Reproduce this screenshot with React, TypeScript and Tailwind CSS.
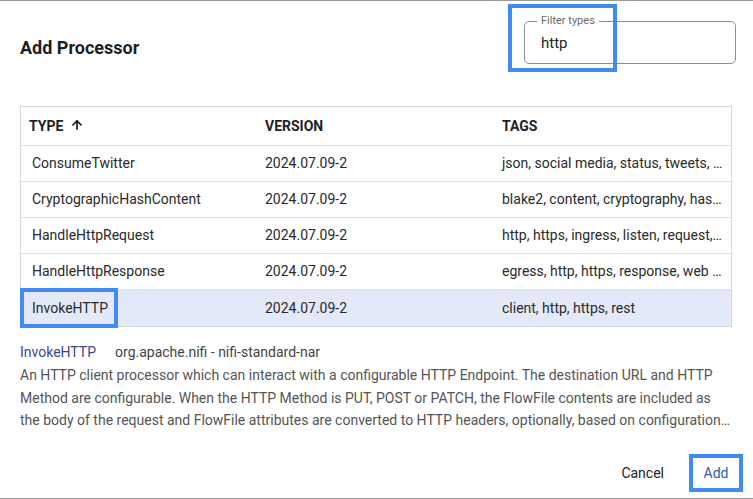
import { ArrowUp } from "lucide-react";

const rows = [
  { type: "ConsumeTwitter", version: "2024.07.09-2", tags: "json, social media, status, tweets, …" },
  { type: "CryptographicHashContent", version: "2024.07.09-2", tags: "blake2, content, cryptography, has…" },
  { type: "HandleHttpRequest", version: "2024.07.09-2", tags: "http, https, ingress, listen, request,…" },
  { type: "HandleHttpResponse", version: "2024.07.09-2", tags: "egress, http, https, response, web …" },
  { type: "InvokeHTTP", version: "2024.07.09-2", tags: "client, http, https, rest" },
];

const App = () => {
  return (
    <div className="flex h-[499px] w-[753px] flex-col overflow-hidden border-y border-[#9a9a9a] bg-white font-['Roboto',sans-serif] text-[#222]">
      {/* header */}
      <div className="flex h-[105px] shrink-0 items-start justify-between pl-5 pr-[17px]">
        <h1 className="mt-[35px] text-[18px] font-bold leading-6 text-[#1f1f1f]">Add Processor</h1>
        <div className="relative mt-5">
          <div className="relative h-[43px] w-[212px] rounded-[5px] border border-[#8e8e8e]">
            <span className="absolute -top-[8px] left-[12px] bg-white px-[4px] text-[11px] leading-[14px] text-[#6b6b6b]">
              Filter types
            </span>
            <div className="pl-4 pt-[11px] text-[15px] leading-5 text-[#1f1f1f]">http</div>
          </div>
          <div className="pointer-events-none absolute -left-[16px] -top-[17px] h-[68px] w-[109px] border-4 border-[#4189f5]" />
        </div>
      </div>

      {/* table */}
      <div className="mx-5 w-[712px] shrink-0 border border-[#d8d8d8] text-[14px]">
        <div className="grid h-[39px] grid-cols-[233px_237px_1fr] items-center border-b border-[#e0e0e0] font-bold text-[#222]">
          <div className="flex items-center gap-[7px] pl-[8px]">
            TYPE <ArrowUp size={14} strokeWidth={3} className="-mt-[2px]" />
          </div>
          <div className="pl-[11px]">VERSION</div>
          <div className="pl-[11px]">TAGS</div>
        </div>
        {rows.map((r, i) => {
          const selected = r.type === "InvokeHTTP";
          return (
            <div
              key={r.type}
              className={`grid h-[36px] grid-cols-[233px_237px_1fr] items-center text-[#2a2a2a] ${
                i < rows.length - 1 ? "border-b border-[#e0e0e0]" : ""
              } ${selected ? "bg-[#e4e9fa]" : ""}`}
            >
              <div className="relative flex h-full items-center pl-[11px]">
                {r.type}
                {selected && (
                  <div className="pointer-events-none absolute -left-[1px] -top-[2px] h-[40px] w-[98px] border-4 border-[#4189f5]" />
                )}
              </div>
              <div className="pl-[11px]">{r.version}</div>
              <div className="whitespace-nowrap pl-[11px]">{r.tags}</div>
            </div>
          );
        })}
      </div>

      {/* details */}
      <div className="mx-5 mt-[15px] w-[712px] text-[14px]">
        <div className="flex items-center gap-[19px] leading-5">
          <span className="font-normal text-[#3c4596]">InvokeHTTP</span>
          <span className="text-[#444]">org.apache.nifi - nifi-standard-nar</span>
        </div>
        <p className="mt-[2px] leading-[22.5px] text-[#555]">
          An HTTP client processor which can interact with a configurable HTTP Endpoint. The destination URL and HTTP
          Method are configurable. When the HTTP Method is PUT, POST or PATCH, the FlowFile contents are included as
          the body of the request and FlowFile attributes are converted to HTTP headers, optionally, based on
          configuration…
        </p>
      </div>

      {/* footer */}
      <div className="mt-auto flex items-center justify-end gap-[13px] pb-[6px] pr-[10px]">
        <button className="h-[38px] px-3 text-[14px] font-normal text-[#222]">Cancel</button>
        <button className="h-[38px] w-[54px] border-4 border-[#4189f5] text-[14px] font-normal text-[#1f64a6]">
          Add
        </button>
      </div>
    </div>
  );
};

export default App;
